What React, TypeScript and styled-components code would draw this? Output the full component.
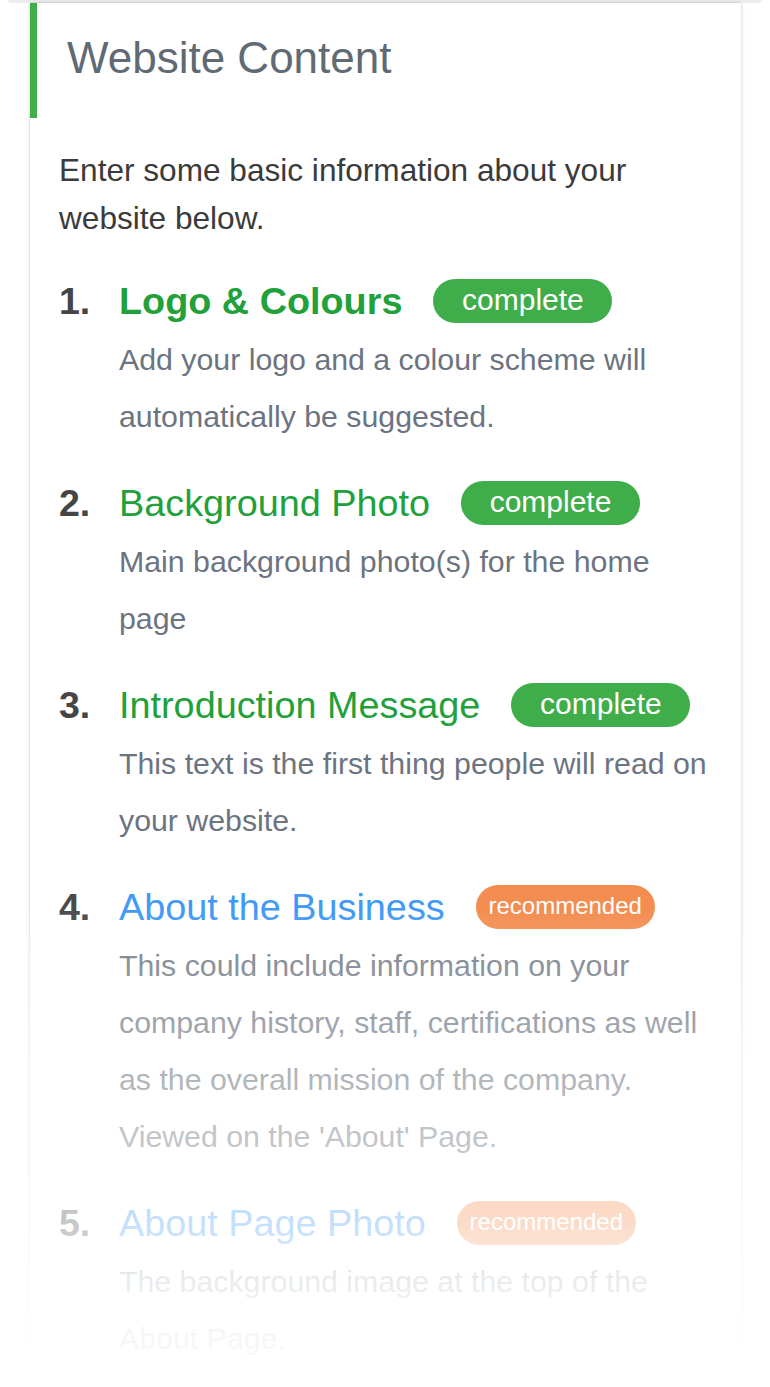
import React from "react";
import styled, { createGlobalStyle } from "styled-components";

const GlobalStyle = createGlobalStyle`
  html, body {
    margin: 0;
    padding: 0;
    background: #ffffff;
  }
  body {
    font-family: "Liberation Sans", Arial, Helvetica, sans-serif;
  }
  * { box-sizing: border-box; }
`;

const Page = styled.div`
  position: relative;
  height: 1387px;
  overflow: hidden;
  background: #ffffff;
`;

const PrevEdge = styled.div`
  height: 3px;
  margin: 0 8px;
  background: #ececec;
  border-radius: 0 0 12px 12px;
`;

const Card = styled.section`
  margin-left: 30px;
  width: 711px;
  min-height: 1500px;
  background: #ffffff;
  box-shadow: 0 0 3px rgba(0, 0, 0, 0.22), 0 1px 6px rgba(0, 0, 0, 0.06);
  border-radius: 2px;
`;

const Header = styled.header`
  height: 115px;
  display: flex;
  align-items: center;
  border-left: 7px solid #3fae48;
  padding-left: 30px;
  padding-bottom: 6px;
`;

const HeaderTitle = styled.h1`
  margin: 0;
  font-size: 44px;
  font-weight: 400;
  color: #5f6a75;
  line-height: 1;
`;

const Body = styled.div`
  padding: 28px 24px 0 29px;
`;

const Intro = styled.p`
  margin: 0 0 32px;
  font-size: 31.6px;
  line-height: 48px;
  color: #3b3b3b;
`;

const List = styled.ol`
  list-style: none;
  margin: 0;
  padding: 0;
  display: flex;
  flex-direction: column;
  gap: 31px;
`;

const Item = styled.li`
  display: grid;
  grid-template-columns: 60px 1fr;
`;

const Number = styled.span`
  height: 54px;
  display: flex;
  align-items: center;
  font-size: 37.5px;
  font-weight: 700;
  color: #454545;
`;

const Content = styled.div`
  display: flex;
  flex-direction: column;
`;

const TitleRow = styled.div`
  height: 54px;
  display: flex;
  align-items: center;
`;

const Title = styled.span<{ $tone: "green" | "blue"; $bold?: boolean }>`
  font-size: 37.8px;
  font-weight: ${(p) => (p.$bold ? 700 : 400)};
  color: ${(p) => (p.$tone === "green" ? "#21a03b" : "#3a96f6")};
  white-space: nowrap;
`;

const Badge = styled.span<{ $kind: "complete" | "recommended" }>`
  margin-left: 31px;
  width: 179px;
  height: 44px;
  border-radius: 22px;
  display: inline-flex;
  align-items: center;
  justify-content: center;
  color: #ffffff;
  background: ${(p) => (p.$kind === "complete" ? "#3fad49" : "#f38a4c")};
  font-size: ${(p) => (p.$kind === "complete" ? "30px" : "24px")};
  padding-bottom: 3px;
`;

const Desc = styled.p`
  margin: 3px 0 0;
  font-size: 30.3px;
  line-height: 57px;
  color: #6b7480;
`;

const Fade = styled.div`
  position: absolute;
  left: 0;
  right: 0;
  bottom: 0;
  height: 527px;
  pointer-events: none;
  background: linear-gradient(
    to bottom,
    rgba(255, 255, 255, 0) 0%,
    rgba(255, 255, 255, 0.03) 9%,
    rgba(255, 255, 255, 0.22) 20%,
    rgba(255, 255, 255, 0.35) 31%,
    rgba(255, 255, 255, 0.48) 42%,
    rgba(255, 255, 255, 0.58) 52%,
    rgba(255, 255, 255, 0.7) 69%,
    rgba(255, 255, 255, 0.86) 80%,
    rgba(255, 255, 255, 0.94) 91%,
    rgba(255, 255, 255, 0.97) 100%
  );
`;

type Step = {
  title: string;
  tone: "green" | "blue";
  bold?: boolean;
  badge: "complete" | "recommended";
  desc: string;
};

const steps: Step[] = [
  {
    title: "Logo & Colours",
    tone: "green",
    bold: true,
    badge: "complete",
    desc: "Add your logo and a colour scheme will automatically be suggested.",
  },
  {
    title: "Background Photo",
    tone: "green",
    badge: "complete",
    desc: "Main background photo(s) for the home page",
  },
  {
    title: "Introduction Message",
    tone: "green",
    badge: "complete",
    desc: "This text is the first thing people will read on your website.",
  },
  {
    title: "About the Business",
    tone: "blue",
    badge: "recommended",
    desc: "This could include information on your company history, staff, certifications as well as the overall mission of the company. Viewed on the 'About' Page.",
  },
  {
    title: "About Page Photo",
    tone: "blue",
    badge: "recommended",
    desc: "The background image at the top of the About Page.",
  },
];

export default function App() {
  return (
    <Page>
      <GlobalStyle />
      <PrevEdge />
      <Card>
        <Header>
          <HeaderTitle>Website Content</HeaderTitle>
        </Header>
        <Body>
          <Intro>Enter some basic information about your website below.</Intro>
          <List>
            {steps.map((s, i) => (
              <Item key={s.title}>
                <Number>{i + 1}.</Number>
                <Content>
                  <TitleRow>
                    <Title $tone={s.tone} $bold={s.bold}>
                      {s.title}
                    </Title>
                    <Badge $kind={s.badge}>{s.badge}</Badge>
                  </TitleRow>
                  <Desc>{s.desc}</Desc>
                </Content>
              </Item>
            ))}
          </List>
        </Body>
      </Card>
      <Fade />
    </Page>
  );
}
